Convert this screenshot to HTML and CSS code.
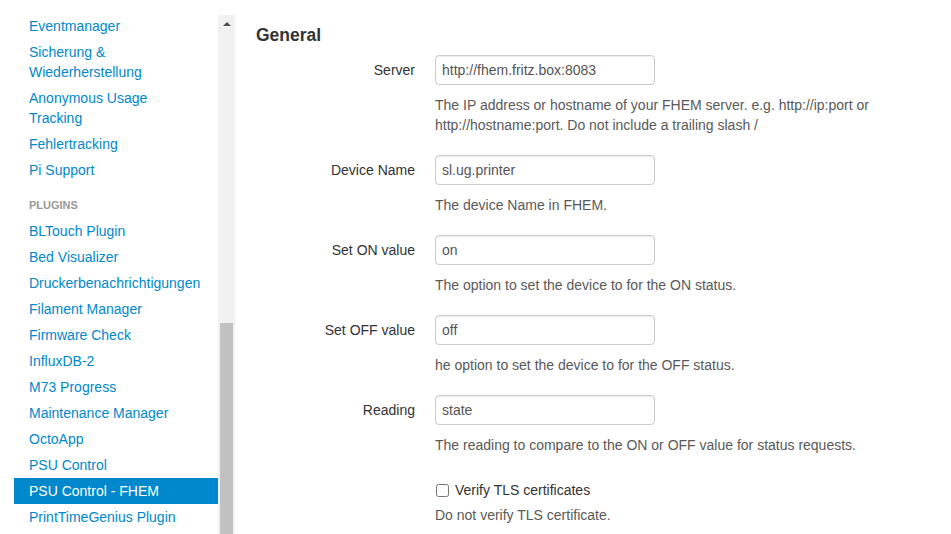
FILE: index.html
```html
<!DOCTYPE html>
<html>
<head>
<meta charset="utf-8">
<link rel="stylesheet" href="styles.css">
</head>
<body>
<div class="page">
  <aside class="sidebar">
    <div class="scrollpane">
      <ul class="nav">
        <li><a>Eventmanager</a></li>
        <li><a>Sicherung &amp; Wiederherstellung</a></li>
        <li><a>Anonymous Usage Tracking</a></li>
        <li><a>Fehlertracking</a></li>
        <li><a>Pi Support</a></li>
        <li class="nav-header">Plugins</li>
        <li><a>BLTouch Plugin</a></li>
        <li><a>Bed Visualizer</a></li>
        <li><a>Druckerbenachrichtigungen</a></li>
        <li><a>Filament Manager</a></li>
        <li><a>Firmware Check</a></li>
        <li><a>InfluxDB-2</a></li>
        <li><a>M73 Progress</a></li>
        <li><a>Maintenance Manager</a></li>
        <li><a>OctoApp</a></li>
        <li><a>PSU Control</a></li>
        <li class="active"><a>PSU Control - FHEM</a></li>
        <li><a>PrintTimeGenius Plugin</a></li>
      </ul>
    </div>
    <div class="scrollbar">
      <div class="arrow"></div>
      <div class="track-space"></div>
      <div class="thumb"></div>
    </div>
  </aside>
  <main class="content">
    <h4 class="title">General</h4>
    <form class="form-horizontal">
      <div class="control-group">
        <label class="control-label">Server</label>
        <div class="controls">
          <input type="text" value="http://fhem.fritz.box:8083">
          <span class="help-block">The IP address or hostname of your FHEM server. e.g. http://ip:port or http://hostname:port. Do not include a trailing slash /</span>
        </div>
      </div>
      <div class="control-group">
        <label class="control-label">Device Name</label>
        <div class="controls">
          <input type="text" value="sl.ug.printer">
          <span class="help-block">The device Name in FHEM.</span>
        </div>
      </div>
      <div class="control-group">
        <label class="control-label">Set ON value</label>
        <div class="controls">
          <input type="text" value="on">
          <span class="help-block">The option to set the device to for the ON status.</span>
        </div>
      </div>
      <div class="control-group">
        <label class="control-label">Set OFF value</label>
        <div class="controls">
          <input type="text" value="off">
          <span class="help-block">he option to set the device to for the OFF status.</span>
        </div>
      </div>
      <div class="control-group">
        <label class="control-label">Reading</label>
        <div class="controls">
          <input type="text" value="state">
          <span class="help-block">The reading to compare to the ON or OFF value for status requests.</span>
        </div>
      </div>
      <div class="control-group">
        <div class="controls check-controls">
          <label class="checkbox"><input type="checkbox"> Verify TLS certificates</label>
          <span class="help-block plain">Do not verify TLS certificate.</span>
        </div>
      </div>
    </form>
  </main>
</div>
</body>
</html>
```

FILE: styles.css
```css
* { box-sizing: border-box; }
html, body { margin: 0; padding: 0; background: #fff; }
body {
  font-family: "Liberation Sans", Arial, sans-serif;
  font-size: 14px;
  line-height: 20px;
  color: #333;
  width: 951px;
  height: 534px;
  overflow: hidden;
}
.page { display: flex; height: 534px; }

.sidebar {
  display: flex;
  width: 235px;
  flex: none;
  padding: 15px 0 0 14px;
  height: 534px;
}
.scrollpane {
  width: 204px;
  overflow: hidden;
  height: 519px;
}
.nav {
  list-style: none;
  margin: -2px 0 0 0;
  padding: 0;
}
.nav li a {
  display: block;
  padding: 3px 15px;
  line-height: 20px;
  color: #0088cc;
  text-decoration: none;
}
.nav li.active a {
  background: #0088cc;
  color: #fff;
}
.nav .nav-header {
  display: block;
  padding: 3px 15px;
  margin-top: 9px;
  font-size: 11px;
  font-weight: bold;
  line-height: 20px;
  color: #999;
  text-transform: uppercase;
}

.scrollbar {
  width: 17px;
  flex: none;
  background: #f1f1f1;
  display: flex;
  flex-direction: column;
  align-items: center;
  height: 519px;
}
.arrow {
  margin-top: 7px;
  width: 0;
  height: 0;
  border-left: 4px solid transparent;
  border-right: 4px solid transparent;
  border-bottom: 4px solid #505050;
}
.track-space { height: 297px; flex: none; }
.thumb {
  width: 13px;
  flex: 1;
  background: #c1c1c1;
}

.content {
  flex: 1;
  padding: 0 30px 0 20px;
}
.title {
  margin: 25px 0 10px 0;
  padding-left: 1px;
  font-size: 17.5px;
  line-height: 20px;
  font-weight: bold;
  color: #333;
}
.form-horizontal { margin: 0; }
.control-group {
  display: flex;
  margin-bottom: 20px;
}
.control-label {
  width: 160px;
  flex: none;
  text-align: right;
  padding-top: 5px;
  line-height: 20px;
  color: #333;
}
.controls {
  margin-left: 20px;
  flex: 1;
}
.check-controls { margin-left: 180px; }
.controls input[type="text"] {
  display: block;
  width: 220px;
  height: 30px;
  padding: 4px 6px;
  margin: 0;
  font-family: "Liberation Sans", Arial, sans-serif;
  font-size: 14px;
  line-height: 20px;
  color: #555;
  border: 1px solid #ccc;
  border-radius: 4px;
  background: #fff;
  box-shadow: inset 0 1px 1px rgba(0,0,0,0.075);
}
.help-block {
  display: block;
  margin-top: 10px;
  color: #595959;
}
.help-block.plain { margin-top: 0; }
.checkbox {
  display: flex;
  align-items: center;
  padding-top: 5px;
  margin-bottom: 5px;
  line-height: 20px;
  color: #333;
}
.checkbox input {
  width: 13px;
  height: 13px;
  margin: 0 6px 0 1px;
}
```
